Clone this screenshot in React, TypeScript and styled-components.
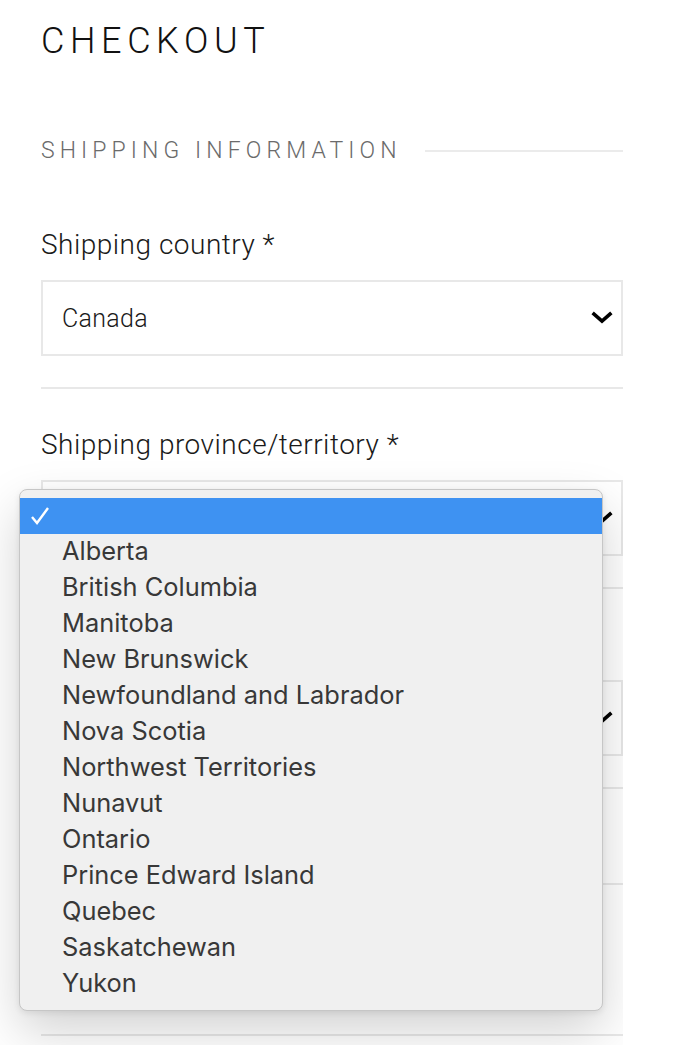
import { createGlobalStyle, styled } from 'styled-components';

const GlobalStyle = createGlobalStyle`
  body {
    margin: 0;
    background: #ffffff;
    font-family: Roboto, 'Liberation Sans', sans-serif;
  }
`;

const provinces = [
  'Alberta',
  'British Columbia',
  'Manitoba',
  'New Brunswick',
  'Newfoundland and Labrador',
  'Nova Scotia',
  'Northwest Territories',
  'Nunavut',
  'Ontario',
  'Prince Edward Island',
  'Quebec',
  'Saskatchewan',
  'Yukon'
];

const Page = styled.div`
  position: relative;
  width: 582px;
  height: 1045px;
  overflow: hidden;
  padding: 0 0 0 41px;
`;

const Title = styled.h1`
  margin: 0;
  padding-top: 21px;
  font-size: 36px;
  line-height: 40px;
  font-weight: 300;
  letter-spacing: 5.6px;
  color: #111;
`;

const SectionHeader = styled.div`
  display: flex;
  align-items: center;
  gap: 23px;
  margin-top: 76px;
`;

const SectionTitle = styled.h2`
  margin: 0;
  font-size: 23px;
  line-height: 28px;
  font-weight: 300;
  letter-spacing: 5.1px;
  color: #6b6b6b;
  white-space: nowrap;
`;

const SectionRule = styled.div`
  flex: 1;
  height: 2px;
  background: #ebebeb;
`;

const Form = styled.div`
  display: flex;
  flex-direction: column;
  margin-top: 24px;
`;

const Field = styled.div`
  display: flex;
  flex-direction: column;
  padding: 40px 0 31px;
  border-bottom: 2px solid #e8e8e8;
`;

const Label = styled.label`
  font-size: 28px;
  line-height: 32px;
  font-weight: 300;
  letter-spacing: 0.5px;
  color: #1a1a1a;
  margin-bottom: 19px;
`;

const SelectBox = styled.div`
  box-sizing: border-box;
  display: flex;
  align-items: center;
  justify-content: space-between;
  height: 76px;
  padding: 0 8px 0 19px;
  border: 2px solid #e8e8e8;
  font-size: 25px;
  font-weight: 300;
  letter-spacing: 0.3px;
  color: #1a1a1a;
`;

const PlainBlock = styled.div<{ $height: number }>`
  height: ${({ $height }) => $height}px;
  border-bottom: 2px solid #e8e8e8;
`;

const Chevron = () => (
  <svg width="22" height="14" viewBox="0 0 22 14" aria-hidden>
    <polyline
      points="3,3 11,10 19,3"
      fill="none"
      stroke="#000"
      strokeWidth="3.6"
      strokeLinecap="square"
    />
  </svg>
);

const Dropdown = styled.ul`
  position: absolute;
  left: 19px;
  top: 489px;
  width: 584px;
  margin: 0;
  padding: 8px 0;
  list-style: none;
  background: #f0f0f0;
  border: 1px solid #c6c6c6;
  border-radius: 8px;
  box-sizing: border-box;
  box-shadow: 0 20px 50px rgba(0, 0, 0, 0.18), 0 2px 6px rgba(0, 0, 0, 0.08);
  font-family: Inter, 'Noto Sans', 'Liberation Sans', sans-serif;
`;

const Option = styled.li<{ $selected?: boolean }>`
  box-sizing: border-box;
  display: flex;
  align-items: center;
  height: 36px;
  padding: 0 0 3px 42px;
  position: relative;
  font-size: 25.4px;
  color: ${({ $selected }) => ($selected ? '#fff' : '#383838')};
  background: ${({ $selected }) => ($selected ? '#3e92f2' : 'transparent')};
`;

const Check = styled.span`
  position: absolute;
  left: 10px;
  top: 0;
  height: 36px;
  display: flex;
  align-items: center;
`;

export default function App() {
  return (
    <>
      <GlobalStyle />
      <Page>
        <Title>CHECKOUT</Title>
        <SectionHeader>
          <SectionTitle>SHIPPING INFORMATION</SectionTitle>
          <SectionRule />
        </SectionHeader>
        <Form>
          <Field>
            <Label>Shipping country *</Label>
            <SelectBox>
              Canada
              <Chevron />
            </SelectBox>
          </Field>
          <Field>
            <Label>Shipping province/territory *</Label>
            <SelectBox>
              <span />
              <Chevron />
            </SelectBox>
          </Field>
          <Field>
            <Label>Shipping city *</Label>
            <SelectBox>
              <span />
              <Chevron />
            </SelectBox>
          </Field>
          <PlainBlock $height={94} />
          <PlainBlock $height={149} />
        </Form>
        <Dropdown>
          <Option $selected>
            <Check>
              <svg width="20" height="20" viewBox="0 0 20 20" aria-hidden>
                <polyline
                  points="2,11 7,17 18,2"
                  fill="none"
                  stroke="#fff"
                  strokeWidth="2.4"
                />
              </svg>
            </Check>
          </Option>
          {provinces.map((p) => (
            <Option key={p}>{p}</Option>
          ))}
        </Dropdown>
      </Page>
    </>
  );
}
